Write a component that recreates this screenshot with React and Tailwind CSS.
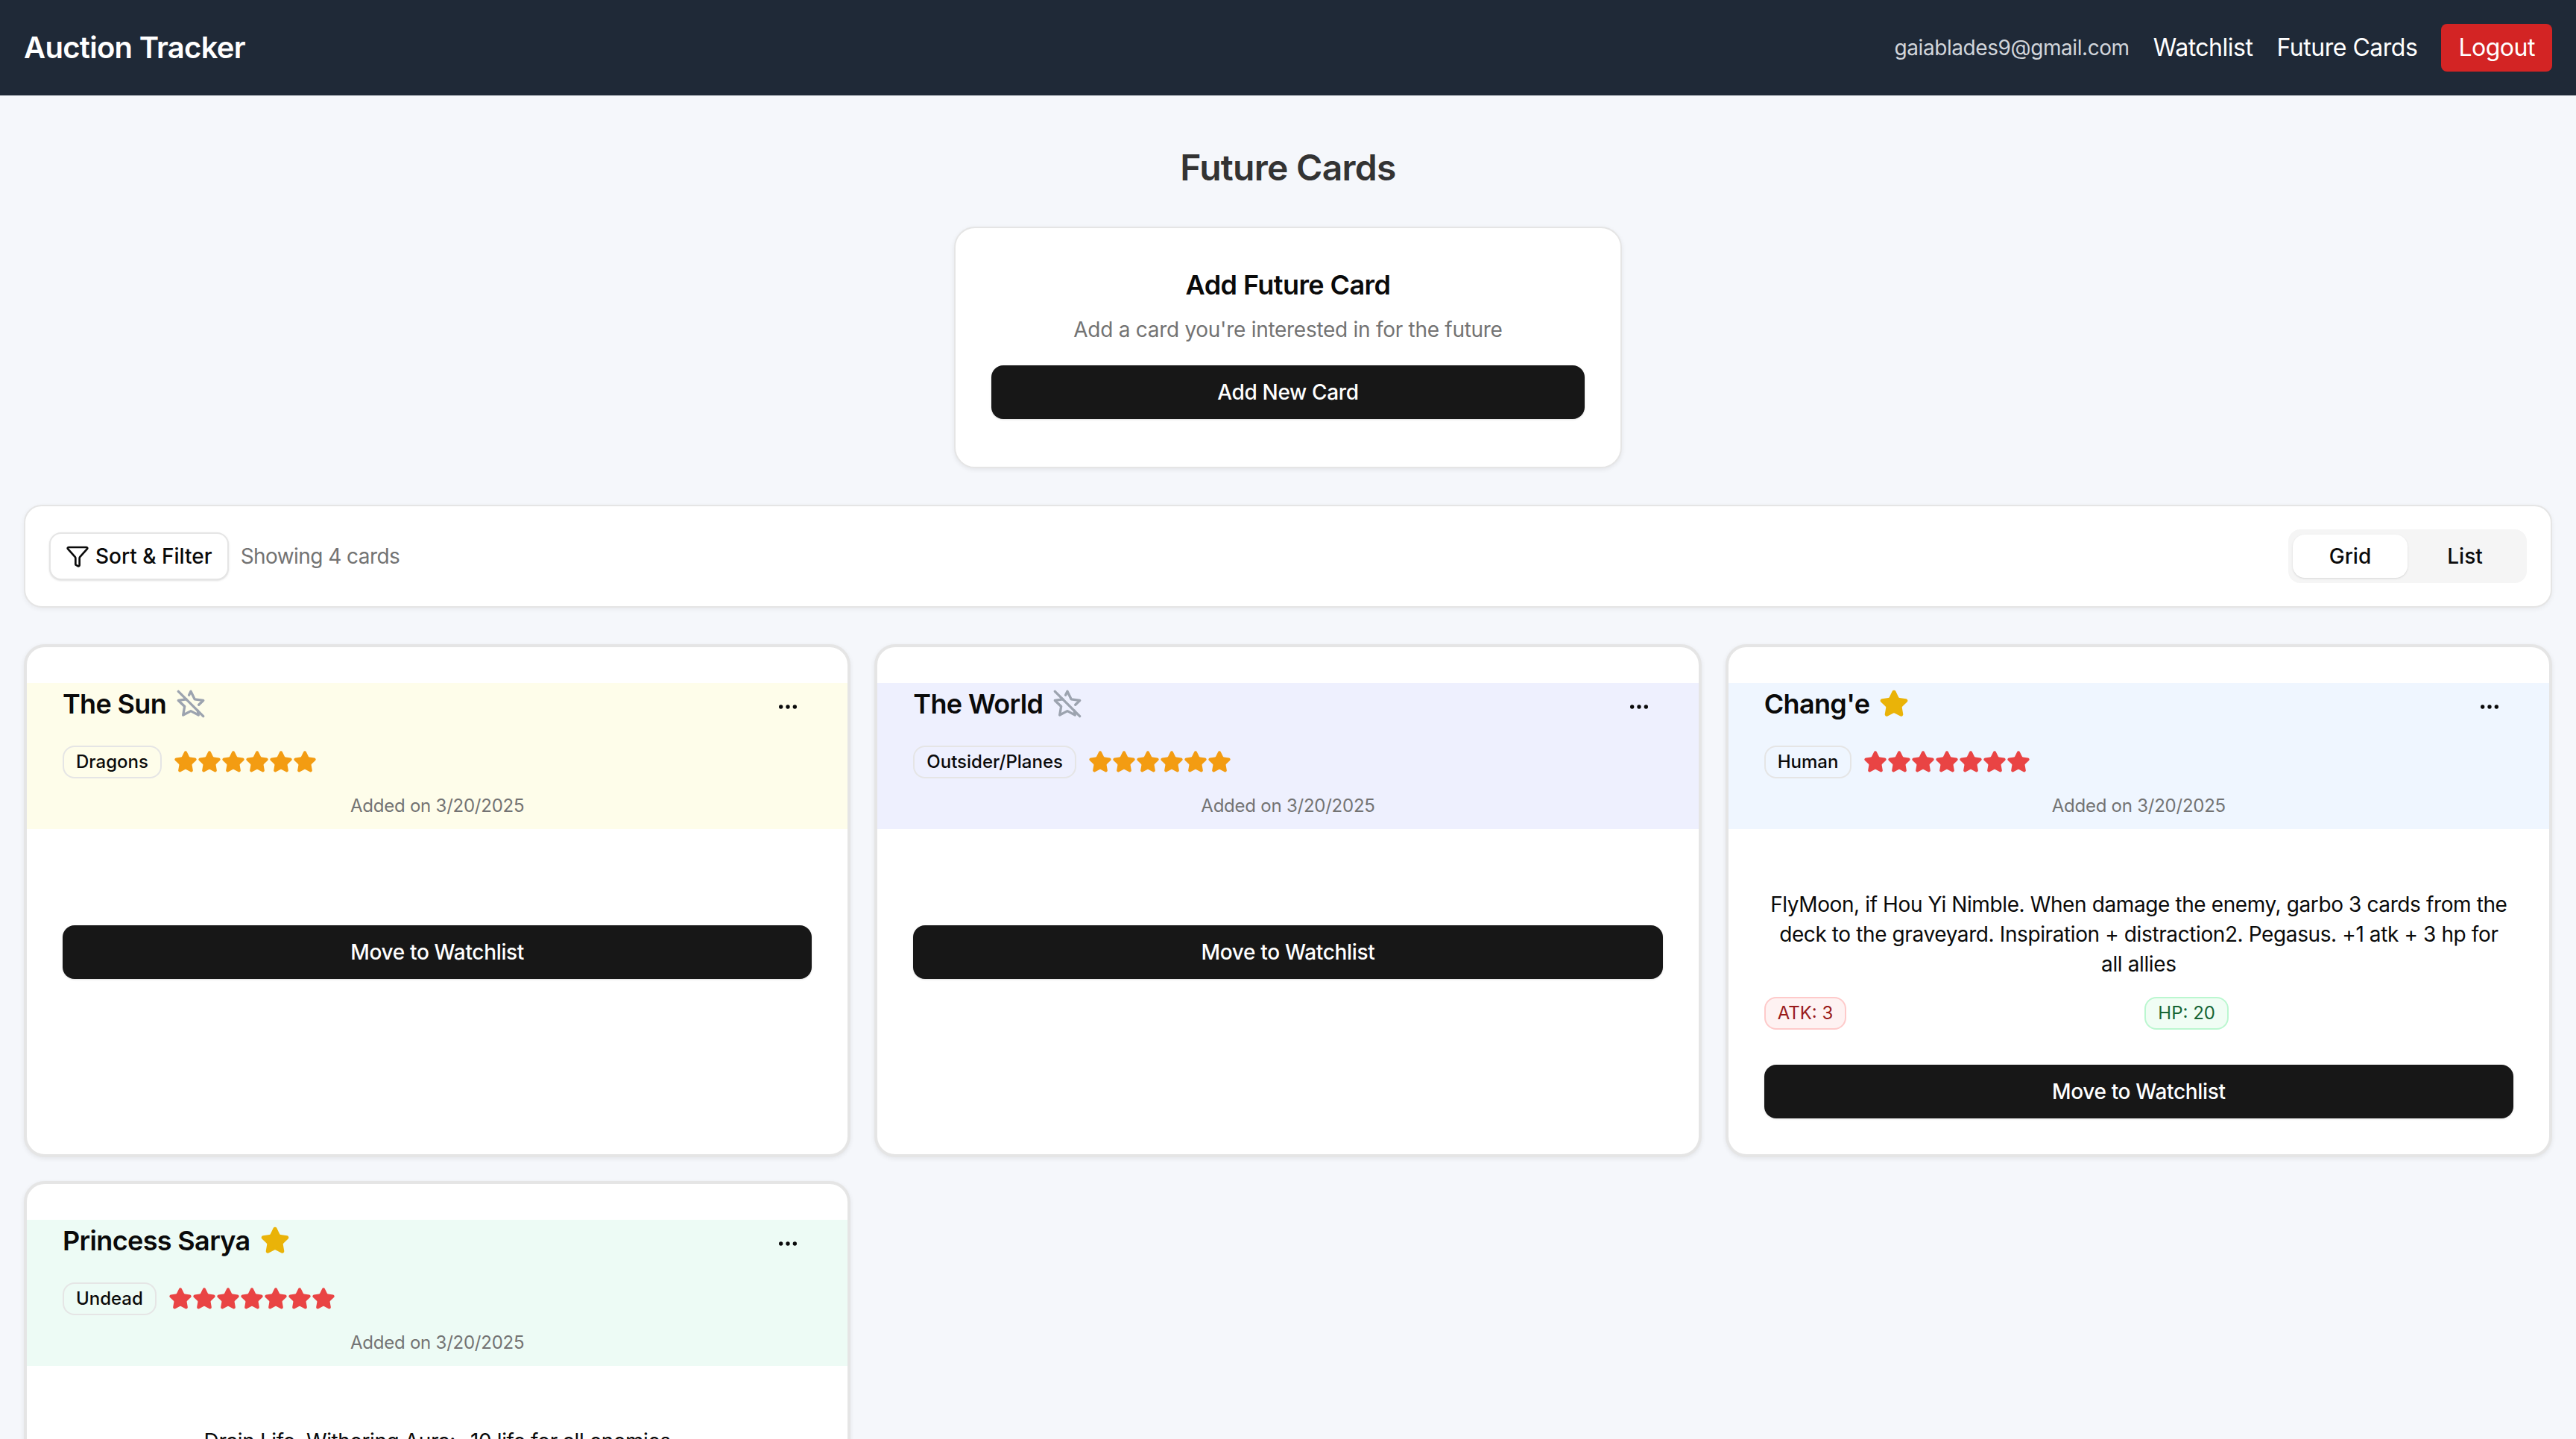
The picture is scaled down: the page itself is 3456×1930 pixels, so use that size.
import { Ellipsis, Funnel, Star, StarOff } from 'lucide-react'

const cards = [
  {
    name: 'The Sun',
    tag: 'Dragons',
    stars: 6,
    starColor: 'text-[#f39c12]',
    band: 'bg-[#fefdea]',
    favourite: false,
  },
  {
    name: 'The World',
    tag: 'Outsider/Planes',
    stars: 6,
    starColor: 'text-[#f39c12]',
    band: 'bg-[#eef0fe]',
    favourite: false,
  },
  {
    name: "Chang'e",
    tag: 'Human',
    stars: 7,
    starColor: 'text-[#e94444]',
    band: 'bg-[#eff6ff]',
    favourite: true,
    description:
      'FlyMoon, if Hou Yi Nimble. When damage the enemy, garbo 3 cards from the deck to the graveyard. Inspiration + distraction2. Pegasus. +1 atk + 3 hp for all allies',
    atk: 3,
    hp: 20,
  },
  {
    name: 'Princess Sarya',
    tag: 'Undead',
    stars: 7,
    starColor: 'text-[#e94444]',
    band: 'bg-[#edfbf5]',
    favourite: true,
    description: 'Drain Life. Withering Aura: -10 life for all enemies',
  },
]

function DarkButton({ children, className = '' }) {
  return (
    <button
      type="button"
      className={`flex h-[72px] w-full items-center justify-center rounded-2xl bg-[#171717] text-[28px] font-medium tracking-[-0.012em] text-white shadow-sm ${className}`}
    >
      {children}
    </button>
  )
}

function FutureCard({ card }) {
  return (
    <article className="rounded-[28px] border-4 border-[#e5e5e5] bg-white pt-12 pb-12 shadow-[0_2px_6px_rgba(0,0,0,0.08)]">
      <div className={`px-12 pb-[15px] ${card.band}`}>
        <div className="flex h-16 items-start justify-between">
          <div className="flex h-14 items-center gap-[13px]">
            <h3 className="text-[36px] leading-14 font-semibold tracking-[-0.018em] text-[#0a0a0a]">{card.name}</h3>
            {card.favourite ? (
              <Star size={40} className="fill-current text-[#eab308]" />
            ) : (
              <StarOff size={40} className="text-[#9ca3af]" />
            )}
          </div>
          <button type="button" className="flex h-16 w-16 items-center justify-center text-[#0a0a0a]">
            <Ellipsis size={32} />
          </button>
        </div>
        <div className="mt-5 flex items-center gap-4">
          <span className="rounded-2xl border-2 border-[#e5e5e5] px-4 py-1 text-[24px] leading-8 font-medium text-[#0a0a0a]">
            {card.tag}
          </span>
          <div className="flex">
            {Array.from({ length: card.stars }, (_, i) => (
              <Star key={i} size={32} className={`fill-current ${card.starColor}`} />
            ))}
          </div>
        </div>
        <p className="mt-[21px] text-center text-[24px] leading-8 tracking-[-0.01em] text-[#737373]">
          Added on 3/20/2025
        </p>
      </div>

      <div className="px-12 pt-[81px]">
        {card.description && (
          <p className="px-1 text-center text-[28px] leading-10 tracking-[-0.014em] text-[#0a0a0a]">
            {card.description}
          </p>
        )}
        {card.atk && (
          <div className="mt-6 grid grid-cols-2 gap-4">
            <span className="w-fit rounded-2xl border-2 border-[#fecaca] bg-[#fef2f2] px-4 py-1 text-[24px] leading-8 text-[#991b1b]">
              ATK: {card.atk}
            </span>
            <span className="w-fit rounded-2xl border-2 border-[#bbf7d0] bg-[#f0fdf4] px-4 py-1 text-[24px] leading-8 text-[#166534]">
              HP: {card.hp}
            </span>
          </div>
        )}
        <DarkButton className={card.atk ? 'mt-[47px]' : 'mt-12'}>Move to Watchlist</DarkButton>
      </div>
    </article>
  )
}

export default function App() {
  return (
    <div className="h-screen overflow-hidden bg-[#f5f7fb] font-[Inter,sans-serif] text-[#0a0a0a] antialiased">
      <header className="flex h-32 items-center justify-between bg-[#1f2937] px-8 text-white">
        <span className="text-[40px] font-semibold tracking-[-0.018em]">Auction Tracker</span>
        <nav className="flex items-center gap-8">
          <span className="text-[28px] tracking-[-0.015em] text-[#d1d5db]">gaiablades9@gmail.com</span>
          <span className="text-[32px] tracking-[-0.015em]">Watchlist</span>
          <span className="text-[32px] tracking-[-0.015em]">Future Cards</span>
          <button
            type="button"
            className="h-16 rounded-lg bg-[#d32424] px-[23px] text-[32px] tracking-[-0.015em] text-white"
          >
            Logout
          </button>
        </nav>
      </header>

      <main className="px-8 pt-[65px]">
        <h1 className="text-center text-[48px] leading-16 font-semibold tracking-[-0.015em] text-[#333333]">
          Future Cards
        </h1>

        <section className="mx-auto mt-[47px] h-[324px] w-[896px] rounded-[28px] border-2 border-[#e5e5e5] bg-white px-12 pt-12 text-center shadow-[0_2px_6px_rgba(0,0,0,0.08)]">
          <h2 className="text-[36px] leading-14 font-semibold tracking-[-0.016em]">Add Future Card</h2>
          <p className="mt-3 text-[28px] leading-10 tracking-[-0.01em] text-[#737373]">
            Add a card you're interested in for the future
          </p>
          <DarkButton className="mt-7">Add New Card</DarkButton>
        </section>

        <section className="mt-[49px] flex h-[138px] items-center justify-between rounded-3xl border-2 border-[#e5e5e5] bg-white px-8 shadow-[0_2px_6px_rgba(0,0,0,0.06)]">
          <div className="flex items-center gap-4">
            <button
              type="button"
              className="flex h-16 items-center gap-2 rounded-2xl border-2 border-[#e5e5e5] bg-white px-5 text-[28px] font-medium shadow-sm"
            >
              <Funnel size={32} />
              Sort &amp; Filter
            </button>
            <span className="text-[28px] tracking-[-0.02em] text-[#737373]">Showing 4 cards</span>
          </div>
          <div className="flex h-[72px] w-80 items-center rounded-2xl bg-[#f5f5f5] p-1.5">
            <button
              type="button"
              className="flex h-[58px] w-[154px] items-center justify-center rounded-2xl bg-white text-[28px] font-medium shadow-sm"
            >
              Grid
            </button>
            <button type="button" className="flex h-[58px] flex-1 items-center justify-center text-[28px] font-medium">
              List
            </button>
          </div>
        </section>

        <section className="mt-[49px] grid grid-cols-3 gap-8">
          {cards.map((card) => (
            <FutureCard key={card.name} card={card} />
          ))}
        </section>
      </main>
    </div>
  )
}
